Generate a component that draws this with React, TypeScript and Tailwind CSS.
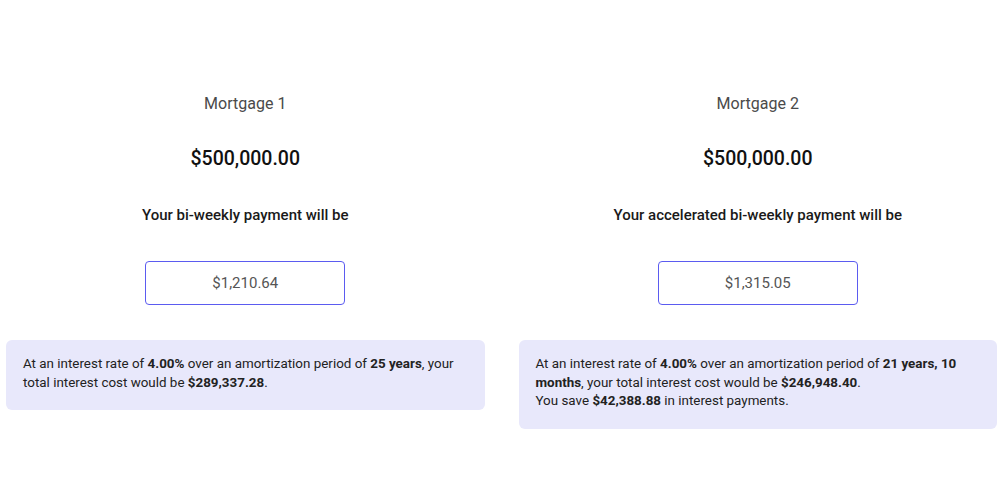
const mortgages = [
  {
    title: "Mortgage 1",
    principal: "$500,000.00",
    label: "Your bi-weekly payment will be",
    payment: "$1,210.64",
    period: "25 years",
    interest: "$289,337.28",
    savings: null as string | null,
  },
  {
    title: "Mortgage 2",
    principal: "$500,000.00",
    label: "Your accelerated bi-weekly payment will be",
    payment: "$1,315.05",
    period: "21 years, 10 months",
    interest: "$246,948.40",
    savings: "$42,388.88",
  },
];

export default function App() {
  return (
    <div
      className="flex h-[500px] w-[1000px] items-start gap-[34px] bg-white pl-[6px] pr-[3px]"
      style={{ fontFamily: "Roboto, 'Noto Sans', sans-serif" }}
    >
      {mortgages.map((m) => (
        <div key={m.title} className="flex w-[479px] flex-col items-center">
          <div className="mt-[92px] text-[16px] leading-6 text-[#4a4a4a]">
            {m.title}
          </div>
          <div className="mt-[29px] text-[19.5px] font-medium leading-7 text-[#111]">
            {m.principal}
          </div>
          <div className="mt-[32px] text-[15px] font-medium leading-5 text-[#1a1a1a]">
            {m.label}
          </div>
          <div className="mt-[36px] flex h-[44px] w-[200px] items-center justify-center rounded-[4px] border border-[#5b5bf0] text-[15px] text-[#555]">
            {m.payment}
          </div>
          <div className="mt-[35px] w-full rounded-[6px] bg-[#e8e8fb] px-[17px] pb-[18px] pt-[15px] text-[13.4px] leading-[18.5px] text-[#222]">
            At an interest rate of <b className="font-bold">4.00%</b> over an
            amortization period of <b className="font-bold">{m.period}</b>,
            your total interest cost would be{" "}
            <b className="font-bold">{m.interest}</b>.
            {m.savings && (
              <>
                <br />
                You save <b className="font-bold">{m.savings}</b> in interest
                payments.
              </>
            )}
          </div>
        </div>
      ))}
    </div>
  );
}
